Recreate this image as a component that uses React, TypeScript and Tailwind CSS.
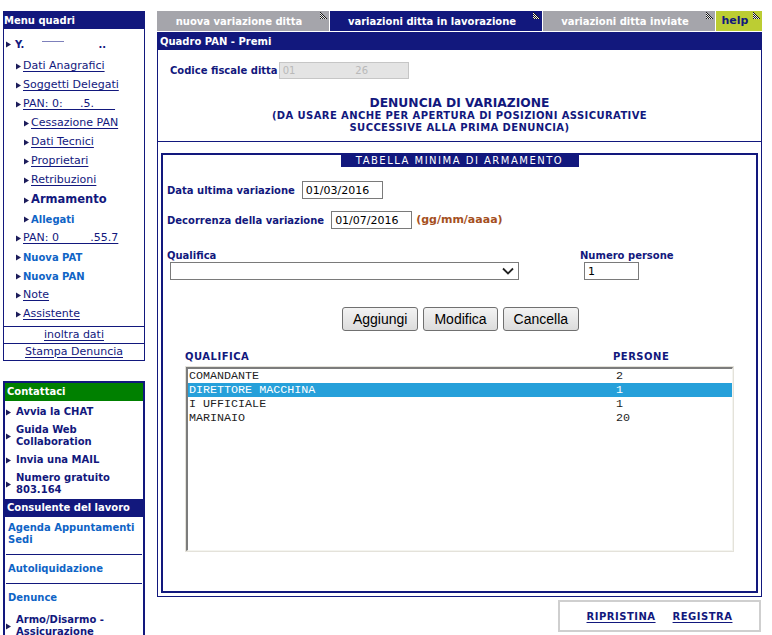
import React from "react"

const Arrow = ({ className = "" }: { className?: string }) => (
  <svg width="5" height="7" viewBox="0 0 5 7" className={"shrink-0 " + className}>
    <path d="M0 0.5L5 3.5L0 6.5Z" fill="#1c1c5a" />
  </svg>
)

const TabCorner = () => (
  <svg width="7" height="7" viewBox="0 0 7 7" className="absolute right-[2px] top-[1px]">
    <defs>
      <pattern id="dither" width="2" height="2" patternUnits="userSpaceOnUse">
        <rect width="2" height="2" fill="#f0f0f0" />
        <rect width="1" height="1" fill="#1a1a1a" />
        <rect x="1" y="1" width="1" height="1" fill="#1a1a1a" />
      </pattern>
    </defs>
    <path d="M0 0H1V1H2V2H3V3H4V4H5V5H6V6H7V7H0Z" fill="url(#dither)" />
  </svg>
)

type MenuItem = { label: React.ReactNode; level: 1 | 2; kind: "link" | "big" | "blue" }

const menu: MenuItem[] = [
  { label: "Dati Anagrafici", level: 1, kind: "link" },
  { label: "Soggetti Delegati", level: 1, kind: "link" },
  { label: "PAN:\u00a00:\u00a0\u00a0\u00a0\u00a0\u00a0.5.\u00a0\u00a0\u00a0\u00a0\u00a0\u00a0", level: 1, kind: "link" },
  { label: "Cessazione PAN", level: 2, kind: "link" },
  { label: "Dati Tecnici", level: 2, kind: "link" },
  { label: "Proprietari", level: 2, kind: "link" },
  { label: "Retribuzioni", level: 2, kind: "link" },
  { label: "Armamento", level: 2, kind: "big" },
  { label: "Allegati", level: 2, kind: "blue" },
  { label: "PAN:\u00a00\u00a0\u00a0\u00a0\u00a0\u00a0\u00a0\u00a0\u00a0\u00a0.55.7", level: 1, kind: "link" },
  { label: "Nuova PAT", level: 1, kind: "blue" },
  { label: "Nuova PAN", level: 1, kind: "blue" },
  { label: "Note", level: 1, kind: "link" },
  { label: "Assistente", level: 1, kind: "link" },
]

const textKind = {
  link: "text-[11px] text-[#12187d] underline underline-offset-2",
  big: "text-[11.5px] font-bold text-[#12187d]",
  blue: "text-[10px] font-bold text-[#0f64c6]",
}

const MenuQuadri = () => (
  <div className="border border-[#12187d] flex flex-col">
    <div className="h-[17px] bg-[#12187d] text-white font-bold text-[10px] flex items-center">Menu quadri</div>
    <div className="mt-[6px] h-[19px] flex items-center gap-[4px] pl-[2px] text-[10px] font-bold text-[#12187d]">
      <Arrow />
      <span>Y.</span>
      <span className="inline-block w-[22px] h-[1px] bg-[#7d80bb] ml-[14px] mb-[7px]" />
      <span className="ml-[30px]">..</span>
    </div>
    <div className="mt-[3px] flex flex-col">
      {menu.map((m, i) => (
        <div
          key={i}
          className={
            "flex items-center gap-[2px] " +
            (m.kind === "big" ? "h-[20px] " : "h-[19px] ") +
            (m.level === 1 ? "pl-[12px]" : "pl-[20px]")
          }
        >
          <Arrow />
          <span className={textKind[m.kind] + " whitespace-pre"}>{m.label}</span>
        </div>
      ))}
    </div>
    <div className="mt-[2px] border-t border-[#12187d] h-[17px] flex items-center justify-center text-[11px] text-[#12187d] underline underline-offset-2">
      inoltra dati
    </div>
    <div className="border-t border-[#12187d] h-[17px] flex items-center justify-center text-[11px] text-[#12187d] underline underline-offset-2">
      Stampa Denuncia
    </div>
  </div>
)

const contacts: React.ReactNode[] = [
  "Avvia la CHAT",
  <>Guida Web<br />Collaboration</>,
  "Invia una MAIL",
  <>Numero gratuito<br />803.164</>,
]

const Contattaci = () => (
  <div className="mt-[20px] border-2 border-[#12187d] flex flex-col text-[10px] font-bold leading-[12px]">
    <div className="h-[18px] bg-[#008000] text-white flex items-center pl-[2px]">Contattaci</div>
    <div className="pt-[5px] pb-[3px] flex flex-col gap-[6px]">
      {contacts.map((c, i) => (
        <div key={i} className="flex items-center gap-[5px] pl-[1px] text-[#12187d]">
          <Arrow />
          <span>{c}</span>
        </div>
      ))}
    </div>
    <div className="h-[18px] bg-[#12187d] text-white flex items-center pl-[2px]">Consulente del lavoro</div>
    <div className="px-[1px] flex flex-col">
      <div className="pt-[5px] pb-[8px] pl-[2px] border-b border-[#12187d] text-[#0f64c6]">
        Agenda Appuntamenti<br />Sedi
      </div>
      <div className="py-[8px] pl-[2px] border-b border-[#12187d] text-[#0f64c6]">Autoliquidazione</div>
      <div className="pt-[8px] pl-[2px] text-[#0f64c6]">Denunce</div>
      <div className="mt-[10px] flex items-center gap-[5px] text-[#12187d]">
        <Arrow />
        <span>Armo/Disarmo -<br />Assicurazione</span>
      </div>
    </div>
  </div>
)

const Tab = ({ label, className, w }: { label: string; className: string; w: string }) => (
  <div className={"relative h-full flex items-center justify-center pr-[8px] text-[10px] font-bold " + w + " " + className}>
    {label}
    <TabCorner />
  </div>
)

const rows = [
  { q: "COMANDANTE", n: "2", sel: false },
  { q: "DIRETTORE MACCHINA", n: "1", sel: true },
  { q: "I UFFICIALE", n: "1", sel: false },
  { q: "MARINAIO", n: "20", sel: false },
]

const btn =
  "h-[24px] px-[10px] border border-[#707070] rounded-[3px] bg-linear-to-b from-[#f3f3f3] to-[#dcdcdc] font-['Liberation_Sans',sans-serif] text-[14px] text-black"

export default function App() {
  return (
    <div className="w-[772px] h-[635px] overflow-hidden bg-white flex items-start font-['DejaVu_Sans',sans-serif]">
      <aside className="ml-[3px] mt-[11px] w-[142px] shrink-0 flex flex-col">
        <MenuQuadri />
        <Contattaci />
      </aside>

      <main className="ml-[12px] mt-[11px] w-[605px] shrink-0 flex flex-col">
        <div className="h-[20px] flex gap-[1px]">
          <Tab label="nuova variazione ditta" w="w-[172px]" className="bg-[#a5a5ab] text-white" />
          <Tab label="variazioni ditta in lavorazione" w="w-[212px]" className="bg-[#12187d] text-white" />
          <Tab label="variazioni ditta inviate" w="w-[172px]" className="bg-[#a5a5ab] text-white" />
          <Tab label="help" w="w-[46px]" className="bg-[#bccd33] text-[#12187d] text-[11px]" />
        </div>
        <div className="mt-[1px] h-[18px] bg-[#12187d] text-white font-bold text-[10px] flex items-center pl-[3px]">
          Quadro PAN - Premi
        </div>

        <div className="border-x border-b border-[#12187d] flex flex-col">
          <div className="mt-[12px] pl-[12px] flex items-center gap-[1px]">
            <span className="text-[10px] font-bold text-[#12187d]">Codice fiscale ditta</span>
            <div className="w-[130px] h-[17px] bg-[#e4e4e4] border border-[#c6c6c6] flex items-center pl-[3px] text-[10px] text-[#b9b9b9]">
              01<span className="ml-[60px]">26</span>
            </div>
          </div>

          <div className="mt-[17px] pb-[7px] border-b border-[#12187d] text-center text-[#12187d] font-bold">
            <div className="text-[12.3px] leading-[14px]">DENUNCIA DI VARIAZIONE</div>
            <div className="text-[10px] leading-[12px] tracking-[0.4px]">
              (DA USARE ANCHE PER APERTURA DI POSIZIONI ASSICURATIVE
              <br />
              SUCCESSIVE ALLA PRIMA DENUNCIA)
            </div>
          </div>

          <div className="mt-[11px] mx-[3px] mb-[3px] border-2 border-[#12187d] flex flex-col pb-[39px]">
            <div className="mx-auto w-[238px] h-[12px] bg-[#12187d] text-white text-[10px] leading-[12px] tracking-[1.5px] text-center">
              TABELLA MINIMA DI ARMAMENTO
            </div>

            <div className="pl-[4px] mt-[14px] flex items-center gap-[7px] h-[18px]">
              <span className="text-[10px] font-bold text-[#12187d]">Data ultima variazione</span>
              <input
                readOnly
                value="01/03/2016"
                className="w-[81px] h-[18px] border border-[#7a7a7a] px-[3px] text-[11px] text-black outline-none"
              />
            </div>

            <div className="pl-[4px] mt-[12px] flex items-center h-[18px]">
              <span className="text-[10px] font-bold text-[#12187d]">Decorrenza della variazione</span>
              <input
                readOnly
                value="01/07/2016"
                className="ml-[7px] w-[81px] h-[18px] border border-[#7a7a7a] px-[3px] text-[11px] text-black outline-none"
              />
              <span className="ml-[4px] text-[11px] font-bold text-[#a5501e]">(gg/mm/aaaa)</span>
            </div>

            <div className="pl-[4px] mt-[21px] flex items-start">
              <div className="flex flex-col">
                <span className="text-[10px] leading-[12px] font-bold text-[#12187d]">Qualifica</span>
                <div className="ml-[3px] w-[349px] h-[18px] border border-[#7a7a7a] flex items-center justify-end pr-[4px]">
                  <svg width="12" height="8" viewBox="0 0 12 8">
                    <path d="M1 1.5L6 6.5L11 1.5" fill="none" stroke="#222" strokeWidth="1.8" />
                  </svg>
                </div>
              </div>
              <div className="ml-[61px] flex flex-col">
                <span className="text-[10px] leading-[12px] font-bold text-[#12187d]">Numero persone</span>
                <input
                  readOnly
                  value="1"
                  className="ml-[4px] w-[55px] h-[18px] border border-[#7a7a7a] px-[3px] text-[11px] text-black outline-none"
                />
              </div>
            </div>

            <div className="mt-[27px] flex justify-center gap-[5px] pl-[2px]">
              <button className={btn}>Aggiungi</button>
              <button className={btn}>Modifica</button>
              <button className={btn}>Cancella</button>
            </div>

            <div className="mt-[20px] px-[22px] flex text-[10px] leading-[11px] font-bold tracking-[0.5px] text-[#12187d]">
              <span className="w-[428px]">QUALIFICA</span>
              <span>PERSONE</span>
            </div>

            <div className="mt-[4px] mx-[22px] h-[186px] border border-[#e4e2da]">
              <div className="h-full border-t-2 border-l-2 border-t-[#7c7c7c] border-l-[#7c7c7c] border-r border-b border-r-[#f4f4ef] border-b-[#f4f4ef] font-['Liberation_Mono',monospace] text-[11.7px] leading-[14px] text-[#1e1e1e]">
                {rows.map((r) => (
                  <div key={r.q} className={"flex pl-[1px] " + (r.sel ? "bg-[#26a0da] text-white" : "")}>
                    <span className="w-[427px]">{r.q}</span>
                    <span>{r.n}</span>
                  </div>
                ))}
              </div>
            </div>
          </div>
        </div>

        <div className="mt-[3px] mr-[1px] self-end w-[203px] h-[32px] border-2 border-[#cfcfcf] flex items-center justify-center gap-[17px] text-[10px] font-bold tracking-[0.5px] text-[#12187d]">
          <span className="underline underline-offset-2">RIPRISTINA</span>
          <span className="underline underline-offset-2">REGISTRA</span>
        </div>
      </main>
    </div>
  )
}
